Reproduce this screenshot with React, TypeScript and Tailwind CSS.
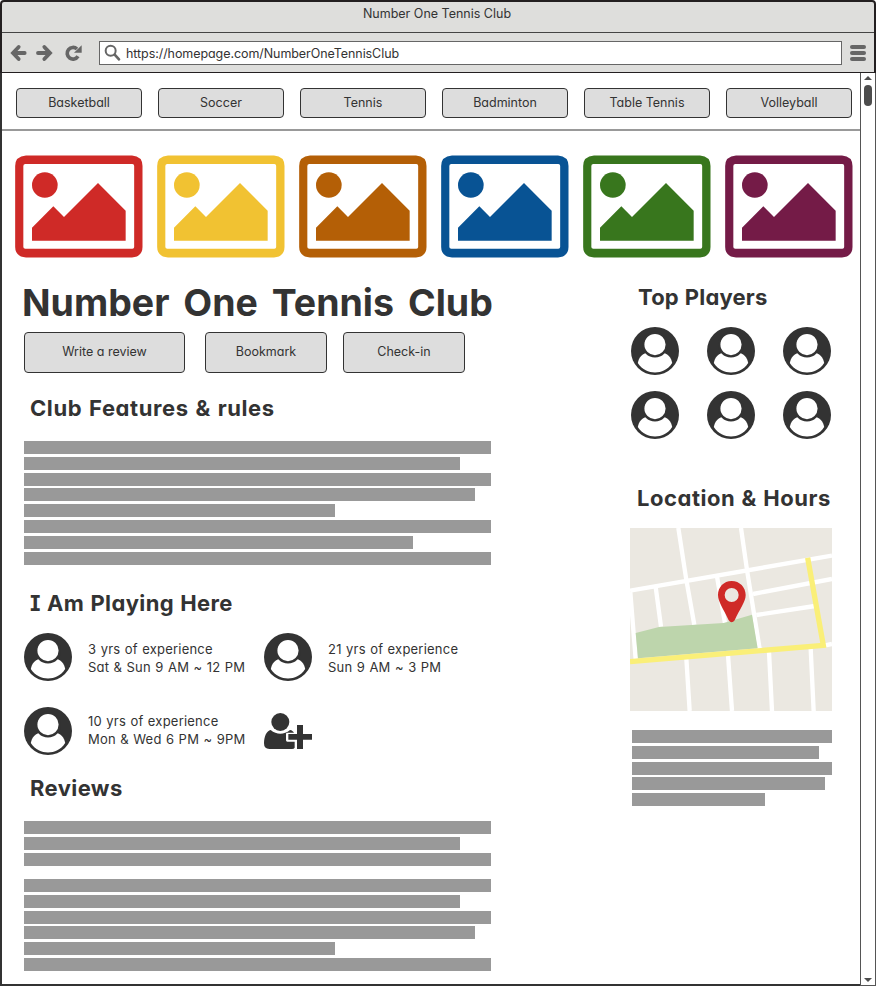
import React from "react";

type TextProps = { children: React.ReactNode; className?: string };

function Avatar() {
  return (
    <svg width="48" height="48" viewBox="0 0 48 48" className="block shrink-0">
      <circle cx="24" cy="24" r="24" fill="#333" />
      <path
        d="M6.800 36C7.600 31 11.500 26 16.800 25.500H31.200C36.500 26 40.400 31 41.200 36C36.500 43 30.500 45.400 24 45.400S11.500 43 6.800 36Z"
        fill="#fff"
      />
      <circle cx="24" cy="17.600" r="11.800" fill="#fff" stroke="#333" strokeWidth="2.400" />
    </svg>
  );
}

function AddUser() {
  return (
    <svg width="48" height="36" viewBox="0 0 144 108" className="block shrink-0" fill="#333">
      <circle cx="49" cy="27" r="27" />
      <path d="M0 91C0 70 8 53 20 51C38 66 60 66 78 51C84 52 87 55 90 59H70Q66 59 66 63V82Q66 86 70 86H92V104Q90 108 84 108H16Q0 108 0 91Z" />
      <path d="M99 36H117V63H144V80H117V108H99V80H73V63H99Z" />
    </svg>
  );
}

function Picture({ color }: { color: string }) {
  return (
    <svg width="128" height="103" viewBox="45 30 384 309" className="block shrink-0" fill={color}>
      <path
        fillRule="evenodd"
        d="M78 31.500H396Q427.500 34 427.500 63V306Q427.500 335 396 337.500H78Q45.500 335 45.500 306V63Q45.500 34 78 31.500ZM76 57Q70 57 70 63V306Q70 311.500 76 311.500H397Q402.500 311.500 402.500 306V63Q402.500 57 397 57Z"
      />
      <circle cx="134.500" cy="120" r="38.500" />
      <path d="M96 248L160 184L192 216L294 114L377 197V287H96Z" />
    </svg>
  );
}

function Bars({ widths }: { widths: number[] }) {
  return (
    <div className="flex flex-col gap-[2.8px]">
      {widths.map((w, i) => (
        <div key={i} className="h-[13px] shrink-0 bg-[#999]" style={{ width: w }} />
      ))}
    </div>
  );
}

function Button({ children, className = "" }: TextProps) {
  return (
    <button
      className={`flex shrink-0 items-center justify-center rounded-[4px] border border-[#333] bg-[#ddd] text-[12.5px] whitespace-nowrap ${className}`}
    >
      {children}
    </button>
  );
}

function Heading({ children, className = "" }: TextProps) {
  return (
    <h2 className={`flex h-8 items-center text-[22px] leading-8 font-bold whitespace-nowrap ${className}`}>
      {children}
    </h2>
  );
}

function Member({ a, b, className = "" }: { a: string; b: string; className?: string }) {
  return (
    <div className="flex h-12 w-60 items-center gap-4">
      <Avatar />
      <p className={`text-[13px] leading-[18px] tracking-[0.22px] whitespace-nowrap [word-spacing:0.5px] ${className}`}>
        {a}
        <br />
        {b}
      </p>
    </div>
  );
}

function CityMap() {
  return (
    <svg width="202" height="183" viewBox="45 39 606 549" className="block">
      <rect x="45" y="39" width="606" height="549" fill="#ebe8e1" />
      <g fill="none" stroke="#fff" strokeWidth="13">
        <path d="M45 227L651 122M190 39L214 195L238 330M378 39L396 165L434 402M122 216L138 335M306 185L330 325M46 232L62 432" />
        <path d="M414 237L651 192M424 300L600 273M630 391L651 387M214 430L224 588M339 420L351 588M462 410L471 588M587 400L596 588" />
      </g>
      <path d="M62 354L132 336L326 324L411 299L428 400L69 430Z" fill="#bdd5ac" />
      <path d="M45 440L625 391L578 128" fill="none" stroke="#faef78" strokeWidth="16" />
      <path
        fillRule="evenodd"
        fill="#cf2a27"
        d="M350 198C374 198 392 217 392 240C392 261 374 282 359 316Q350 328 341 316C326 282 309 261 309 240C309 217 326 198 350 198ZM350 219A21 21 0 1 0 350 261A21 21 0 1 0 350 219Z"
      />
    </svg>
  );
}

const colors = ["#cf2a27", "#f1c232", "#b45f06", "#085394", "#38761d", "#741b47"];
const sports = ["Basketball", "Soccer", "Tennis", "Badminton", "Table Tennis", "Volleyball"];

export default function App() {
  return (
    <div className="flex h-[986px] w-[876px] flex-col overflow-hidden bg-white font-['Inter','Liberation_Sans',sans-serif] text-[#333] [font-feature-settings:'cv11']">
      <header className="flex h-[73px] shrink-0 flex-col rounded-t-[4px] border-x-2 border-t-2 border-b border-[#231f20] bg-[#dededc]">
        <div className="flex h-[31px] items-center justify-center border-b border-[#444] pr-[2px] pb-[6px] text-[12.5px]">
          <span>Number One Tennis Club</span>
        </div>
        <div className="flex h-[39px] items-center pr-[7px] pl-[8px]">
          <svg width="76" height="24" viewBox="30 123 228 72" className="block" fill="none" stroke="#666">
            <path d="M56 141L39 159L56 177M40 159H74" strokeWidth="11.500" strokeLinecap="round" />
            <path d="M133 141L150 159L133 177M149 159H114" strokeWidth="11.500" strokeLinecap="round" />
            <path d="M231 147A17.500 17.500 0 1 0 234 169" strokeWidth="11" />
            <path d="M245 136V158H222Z" fill="#666" stroke="none" />
          </svg>
          <div className="ml-[13px] flex h-6 w-[743px] items-center border border-[#666] bg-white text-[12.500px]">
            <svg width="26" height="22" viewBox="300 126 78 66" className="block" fill="none" stroke="#666">
              <circle cx="332" cy="152" r="15" strokeWidth="6" />
              <path d="M344 164L357 178" strokeWidth="8" strokeLinecap="round" />
            </svg>
            <span className="pt-[3px] tracking-[-0.07px]">https://homepage.com/NumberOneTennisClub</span>
          </div>
          <div className="ml-2 flex flex-col gap-[2px]">
            <i className="h-1 w-4 rounded-full bg-[#666]" />
            <i className="h-1 w-4 rounded-full bg-[#666]" />
            <i className="h-1 w-4 rounded-full bg-[#666]" />
          </div>
        </div>
      </header>
      <div className="flex h-[913px]">
        <main className="w-[860px] border-b-2 border-l-2 border-[#333]">
          <nav className="flex h-[58px] gap-4 border-b-2 border-[#999] pt-[15px] pl-[14px]">
            {sports.map((s) => (
              <Button key={s} className="h-[30px] w-[126px]">
                {s}
              </Button>
            ))}
          </nav>
          <div className="mt-6 flex gap-[14px] pl-[13px]">
            {colors.map((c) => (
              <Picture key={c} color={c} />
            ))}
          </div>
          <div className="flex pl-[22px]">
            <section className="w-[606px] pt-[23px]">
              <h1 className="-ml-[2px] flex h-11 items-center text-[37.500px] leading-[44px] font-bold whitespace-nowrap [word-spacing:5px]">
                Number One Tennis Club
              </h1>
              <div className="mt-[7px] flex">
                <Button className="h-[41px] w-[161px]">Write a review</Button>
                <Button className="ml-5 h-[41px] w-[122px]">Bookmark</Button>
                <Button className="ml-4 h-[41px] w-[122px]">Check-in</Button>
              </div>
              <Heading className="mt-[19px] ml-[6px] tracking-[0.6px] [word-spacing:1px]">
                Club Features &amp; rules
              </Heading>
              <div className="mt-[17px] h-[126px]">
                <Bars widths={[467, 436, 467, 451, 311, 467, 389, 467]} />
              </div>
              <Heading className="mt-5 ml-[6px] tracking-[0.4px] [font-feature-settings:'cv11','cv08'] [word-spacing:0.5px]">
                I Am Playing Here
              </Heading>
              <div className="mt-[14px] flex">
                <Member className="pt-[2px]" a="3 yrs of experience" b="Sat &amp; Sun 9 AM ~ 12 PM" />
                <Member className="pt-[2px]" a="21 yrs of experience" b="Sun 9 AM ~ 3 PM" />
              </div>
              <div className="mt-[26px] flex items-center">
                <Member className="pb-[3px]" a="10 yrs of experience" b="Mon &amp; Wed 6 PM ~ 9PM" />
                <AddUser />
              </div>
              <Heading className="mt-[17px] ml-[6px] tracking-[0.4px]">Reviews</Heading>
              <div className="mt-[17px] flex flex-col gap-[13.400px]">
                <Bars widths={[467, 436, 467]} />
                <Bars widths={[467, 436, 467, 451, 311, 467]} />
              </div>
            </section>
            <aside className="w-[202px] pt-[23px]">
              <Heading className="ml-[8px] tracking-[0.2px] [word-spacing:0.5px]">Top Players</Heading>
              <div className="mt-[14px] ml-px grid w-[200px] grid-cols-[48px_48px_48px] gap-x-7 gap-y-4">
                {colors.map((c) => (
                  <Avatar key={c} />
                ))}
              </div>
              <Heading className="mt-[43px] ml-[7px] tracking-[0.55px] [word-spacing:0.5px]">
                Location &amp; Hours
              </Heading>
              <div className="mt-[14px]">
                <CityMap />
              </div>
              <div className="mt-[19px] ml-[2px]">
                <Bars widths={[200, 187, 200, 193, 133]} />
              </div>
            </aside>
          </div>
        </main>
        <div className="flex w-4 flex-col items-center border-x border-b border-[#555] bg-white pt-[3px] pb-[3px]">
          <svg width="8" height="4" viewBox="0 0 8 4" fill="#4d4d4d">
            <path d="M0 4L4 0L8 4Z" />
          </svg>
          <div className="mt-[5px] h-[21px] w-2 rounded-full bg-[#4d4d4d]" />
          <svg className="mt-auto" width="8" height="4" viewBox="0 0 8 4" fill="#4d4d4d">
            <path d="M0 0L4 4L8 0Z" />
          </svg>
        </div>
      </div>
    </div>
  );
}
